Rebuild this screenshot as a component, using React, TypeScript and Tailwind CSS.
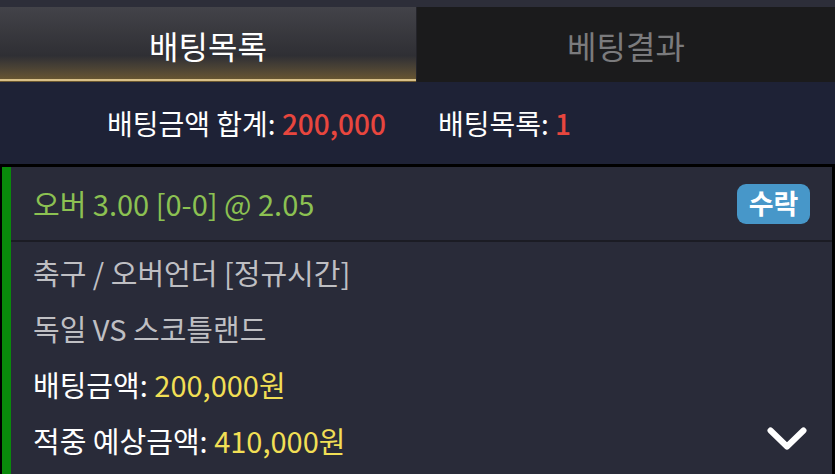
const font = { fontFamily: '"Noto Sans CJK KR", "Noto Sans", sans-serif' };

function Row({ children }: { children: React.ReactNode }) {
  return <div className="h-[56px] flex items-center text-[29px]">{children}</div>;
}

export default function App() {
  return (
    <div className="w-[835px] h-[474px] overflow-hidden bg-[#292b39]" style={font}>
      <div className="h-[7px] bg-[#2d2e39]" />

      <div className="flex h-[75px]">
        <div className="relative w-[417px] flex items-center justify-center bg-gradient-to-b from-[#434349] via-[#2f2f34] via-65% to-[#6e5a30] border-r border-[#24242a]">
          <span className="text-[32px] text-white">배팅목록</span>
          <div className="absolute left-0 right-0 bottom-[1px] h-[2px] bg-[#d8c088]" />
        </div>
        <div className="flex-1 flex items-center justify-center bg-[#1b1b1c]">
          <span className="text-[32px] text-[#7b7b7d]">베팅결과</span>
        </div>
      </div>

      <div className="h-[82px] bg-[#1e2236] flex items-center pl-[107px] text-[28px] text-white">
        <span>
          배팅금액 합계: <span className="text-[#e8463e] font-medium">200,000</span>
        </span>
        <span className="ml-[52px]">
          배팅목록: <span className="text-[#e8463e] font-medium">1</span>
        </span>
      </div>

      <div className="bg-black pt-[3px] pl-[2px] pr-[3px] h-[310px]">
        <div className="relative h-full bg-[#292b39] border-l-[9px] border-[#098a0b]">
          <div className="h-[75px] flex items-center justify-between pl-[22px] pr-[22px] border-b-2 border-[#1b1c24]">
            <span className="text-[29px] text-[#8cc152]">오버 3.00 [0-0] @ 2.05</span>
            <span className="w-[73px] h-[40px] rounded-[9px] bg-[#4797c9] flex items-center justify-center text-white text-[27px] font-bold">
              수락
            </span>
          </div>
          <div className="pl-[22px] pt-[3px]">
            <Row>
              <span className="text-[#bfbfc3]">축구 / 오버언더 [정규시간]</span>
            </Row>
            <Row>
              <span className="text-[#bfbfc3]">독일 VS 스코틀랜드</span>
            </Row>
            <Row>
              <span className="text-white">
                배팅금액: <span className="text-[#f1df55]">200,000원</span>
              </span>
            </Row>
            <Row>
              <span className="text-white">
                적중 예상금액: <span className="text-[#f1df55]">410,000원</span>
              </span>
            </Row>
          </div>
          <svg
            className="absolute right-[25px] bottom-[24px]"
            width="40"
            height="23"
            viewBox="0 0 40 23"
            fill="none"
          >
            <polyline
              points="3.5,3.5 20,19.5 36.5,3.5"
              stroke="white"
              strokeWidth="6"
              strokeLinecap="round"
              strokeLinejoin="round"
            />
          </svg>
        </div>
      </div>
    </div>
  );
}
